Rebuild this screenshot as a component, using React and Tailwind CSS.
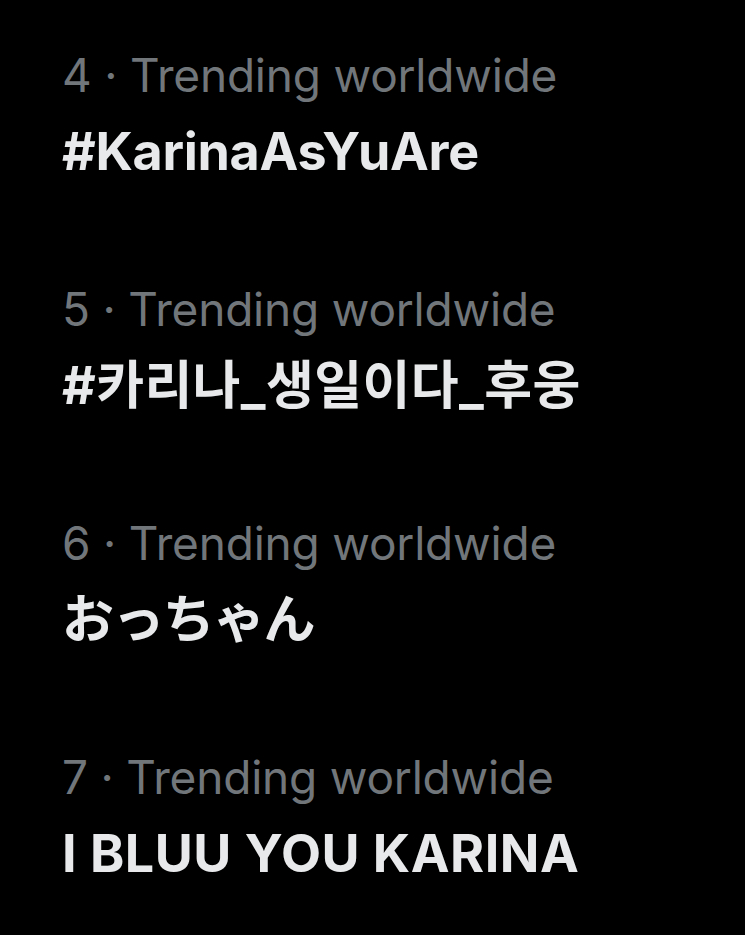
export default function App() {
  const items = [
    { n: 4, title: "#KarinaAsYuAre", cls: "tracking-[-0.3px]" },
    { n: 5, title: "#카리나_생일이다_후웅", cls: "tracking-[0.4px]" },
    { n: 6, title: "おっちゃん", cls: "tracking-[-1.6px]" },
    { n: 7, title: "I BLUU YOU KARINA", cls: "tracking-[0.5px]" },
  ];
  return (
    <div
      className="w-[745px] h-[935px] bg-black overflow-hidden pl-[62px] pt-[47px] flex flex-col gap-[97px]"
      style={{ fontFamily: 'Inter, "Noto Sans CJK KR", "Noto Sans CJK JP", sans-serif' }}
    >
      {items.map((it) => (
        <div key={it.n} className="flex flex-col gap-[17px]">
          <div className="text-[46px] leading-[56px] text-[#71767b] tracking-[-0.2px]">
            {it.n} · Trending worldwide
          </div>
          <div className={"text-[52px] leading-[64px] font-bold text-[#e7e9ea] " + it.cls}>
            {it.title}
          </div>
        </div>
      ))}
    </div>
  );
}
